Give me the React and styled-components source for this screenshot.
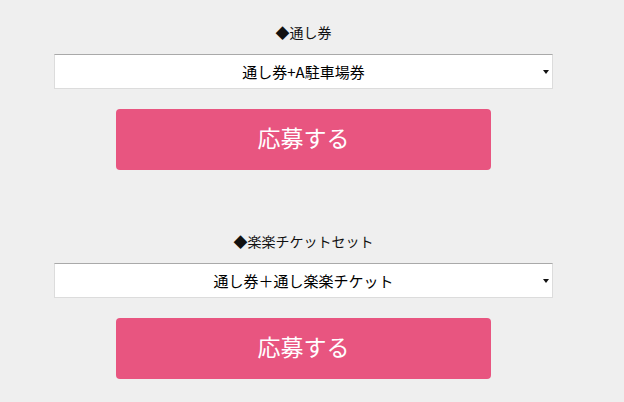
import React, { useState } from 'react'
import styled, { createGlobalStyle } from 'styled-components';

const GlobalStyle = createGlobalStyle`
  html, body {
    margin: 0;
    padding: 0;
    background: #efefef;
  }
  body {
    font-family: "Noto Sans CJK JP", "Noto Sans", sans-serif;
    color: #111;
  }
`

const tickets = [
  {
    title: '◆通し券',
    options: ['通し券+A駐車場券', '通し券', '通し券+B駐車場券'],
  },
  {
    title: '◆楽楽チケットセット',
    options: ['通し券＋通し楽楽チケット', '1日券＋1日楽楽チケット'],
  },
]

const TicketBlock = ({ title, options }) => {
  const [choice, setChoice] = useState(options[0]);

  return (
    <Section>
      <Label>{title}</Label>
      <SelectWrap>
        <Select value={choice} onChange={(e) => setChoice(e.target.value)}>
          {options.map((o) => (
            <option key={o} value={o}>{o}</option>
          ))}
        </Select>
        <Arrow />
      </SelectWrap>
      <Button type="button">応募する</Button>
    </Section>
  )
}

const App = () => {
  return (
    <>
      <GlobalStyle />
      <Page>
        {tickets.map((t) => (
          <TicketBlock key={t.title} title={t.title} options={t.options} />
        ))}
      </Page>
    </>
  )
}

const Page = styled.div`
  display: flex;
  flex-direction: column;
  padding: 22px 71px 0 54px;
  gap: 61px;
`

const Section = styled.div`
  display: flex;
  flex-direction: column;
`

const Label = styled.div`
  height: 20px;
  line-height: 20px;
  font-size: 14px;
  text-align: center;
  color: #111;
`

const SelectWrap = styled.div`
  position: relative;
  margin-top: 12px;
  height: 35px;
`

const Select = styled.select`
  appearance: none;
  -webkit-appearance: none;
  width: 100%;
  height: 35px;
  margin: 0;
  padding: 0 20px;
  box-sizing: border-box;
  background: #fff;
  border: 1px solid #dcdcdc;
  border-top-color: #a9a9a9;
  border-radius: 0;
  font-family: "Noto Sans CJK JP", "Noto Sans", sans-serif;
  font-size: 15px;
  color: #000;
  text-align: center;
  text-align-last: center;
  word-spacing: 1px;
  outline: none;
`

const Arrow = styled.span`
  position: absolute;
  right: 4px;
  top: 16px;
  width: 0;
  height: 0;
  border-left: 3.5px solid transparent;
  border-right: 3.5px solid transparent;
  border-top: 4px solid #111;
  pointer-events: none;
`

const Button = styled.button`
  display: flex;
  justify-content: center;
  align-items: center;
  width: 375px;
  height: 61px;
  margin: 20px 0 0 62px;
  padding: 0 0 5px;
  border: none;
  border-radius: 4px;
  background-color: #e85580;
  color: #fff;
  font-family: "Noto Sans CJK JP", "Noto Sans", sans-serif;
  font-size: 23px;
  cursor: pointer;
`

export default App;
